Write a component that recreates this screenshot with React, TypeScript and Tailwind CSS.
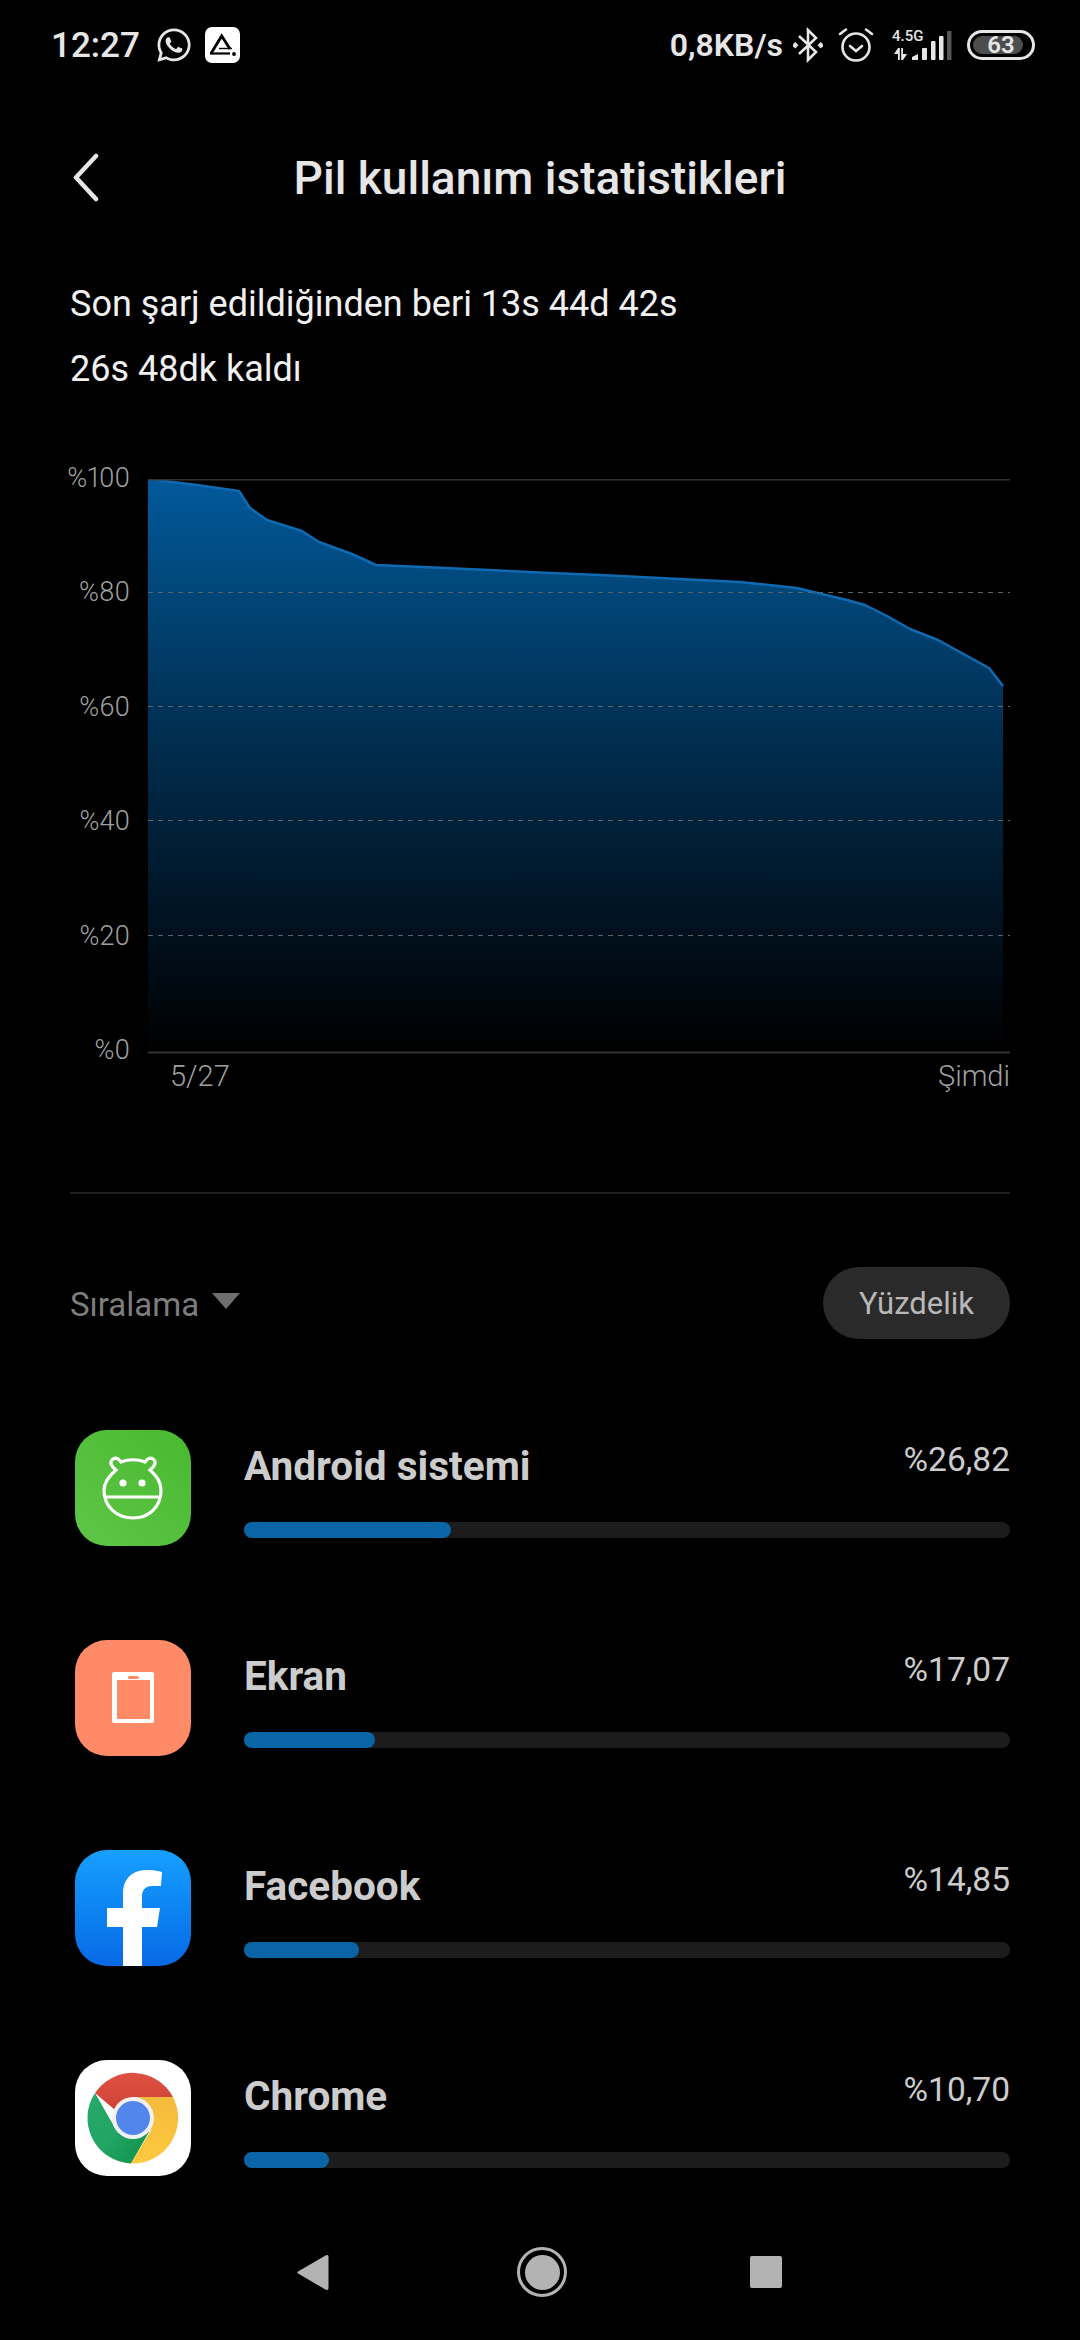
import { FaWhatsapp } from 'react-icons/fa';

// Battery usage stats screen (MIUI dark). Chart coordinates are in page pixels, shifted by the svg origin.

const CURVE: [number, number][] = [
  [148, 479], [197, 485], [239, 491], [250, 508], [267, 520], [302, 531], [319, 542], [352, 554],
  [376, 565], [423, 567], [550, 573], [600, 575], [740, 582], [797, 588], [847, 600], [865, 605],
  [887, 616], [910, 629], [938, 640], [960, 652], [989, 668], [1003, 686],
];

const points = CURVE.map(([x, y]) => `${x - 148},${y - 479}`).join(' ');

function BatteryChart() {
  return (
    <svg width={862} height={575} viewBox="0 0 862 575" className="block">
      <defs>
        <linearGradient id="chartFill" x1="0" y1="0" x2="0" y2="1">
          <stop offset="0" stopColor="#02599b" />
          <stop offset="0.2" stopColor="#014678" />
          <stop offset="0.45" stopColor="#012e50" />
          <stop offset="0.75" stopColor="#011424" />
          <stop offset="1" stopColor="#000000" />
        </linearGradient>
      </defs>
      <polygon points={`0,573 ${points} 855,573`} fill="url(#chartFill)" />
      <polyline points={points} fill="none" stroke="#0f6ab2" strokeWidth={2.5} strokeLinejoin="round" />
      <line x1={0} x2={862} y1={0.5} y2={0.5} stroke="#333333" strokeWidth={2} />
      {[113, 227, 341, 456].map((y) => (
        <line key={y} x1={0} x2={862} y1={y + 0.5} y2={y + 0.5} stroke="#5c6468" strokeWidth={1} strokeDasharray="5 5" />
      ))}
      <line x1={0} x2={862} y1={573.5} y2={573.5} stroke="#333333" strokeWidth={2} />
    </svg>
  );
}

function AppMark() {
  return (
    <div className="ml-[12px] h-[36px] w-[35px] rounded-[7px] bg-white">
      <svg width={35} height={36} viewBox="0 0 35 36" fill="none" stroke="#000">
        <path d="M6 26.5 L16.7 9 L25 22" strokeWidth={2.8} />
        <path d="M14 21.5 H27" strokeWidth={1.4} />
        <path d="M5 26.5 H25" strokeWidth={2.2} />
        <circle cx={29} cy={27} r={1.9} fill="#000" stroke="none" />
      </svg>
    </div>
  );
}

function StatusRight() {
  return (
    <div className="flex items-center">
      <span className="text-[32px] font-semibold leading-none text-[#e6e6e6]">0,8KB/s</span>
      <svg width={30} height={36} viewBox="0 0 30 36" fill="none" stroke="#e6e6e6" strokeWidth={2.6} className="ml-[10px]">
        <path d="M6 9 L23 25 L15 33 V3 L23 11 L6 27" />
        <rect x={0} y={16} width={4.5} height={4.5} fill="#e6e6e6" stroke="none" transform="rotate(45 2.25 18.25)" />
        <rect x={25.5} y={16} width={4.5} height={4.5} fill="#e6e6e6" stroke="none" transform="rotate(45 27.75 18.25)" />
      </svg>
      <svg width={36} height={36} viewBox="0 0 36 36" fill="none" stroke="#e6e6e6" strokeWidth={2.6} className="ml-[15px]" strokeLinecap="round">
        <circle cx={18} cy={20} r={13.5} />
        <path d="M12 19 L18 24 L24 19" />
        <path d="M2 7 L8 2.5" />
        <path d="M34 7 L28 2.5" />
      </svg>
      <div className="relative ml-[18px] h-[31px] w-[60px]">
        <svg width={60} height={31} viewBox="0 0 60 31" fill="#e6e6e6" className="block">
          <path d="M6 18 L2 24 H6 V30 H7.8 V18 Z" />
          <path d="M11 30 L15 24 H11 V18 H9.2 V30 Z" />
          <path d="M20 30 V27 L26 24 V30 Z" />
          <rect x={30} y={18} width={5} height={12} rx={1} />
          <rect x={39} y={11} width={4.5} height={19} rx={1} />
          <rect x={47} y={6} width={4.5} height={24} rx={1} />
          <rect x={55} y={1} width={4.5} height={29} fill="#555555" />
        </svg>
        <span className="absolute left-0 top-0 text-[15px] font-medium leading-[13px] text-[#e6e6e6]">4.5G</span>
      </div>
      <div className="ml-[15px] flex h-[30px] w-[68px] items-center rounded-full border-[3px] border-[#e6e6e6] p-[3px]">
        <div className="relative h-full w-[50px] rounded-full bg-[#4d4d4d]">
          <span className="absolute inset-0 flex items-center justify-center pl-[6px] text-[24px] font-semibold leading-none text-[#e6e6e6]">63</span>
        </div>
      </div>
    </div>
  );
}

function AndroidIcon() {
  return (
    <div className="h-[116px] w-[116px] rounded-[32px] bg-gradient-to-tr from-[#5fc647] to-[#48b92f]">
      <svg width={116} height={116} viewBox="0 0 116 116" fill="none" stroke="#fff" strokeWidth={3.2}>
        <path d="M41 40 C36 36 34 32 38 29 C41 27 44 29 46 32 C53 29 63 29 70 32 C72 29 75 27 78 29 C82 32 80 36 75 40 C82 46 86 53 86 60 C86 77 74 88 58 88 C42 88 29 77 29 60 C29 53 34 46 41 40 Z" />
        <path d="M30 67 H85" />
        <circle cx={48} cy={53} r={3.6} fill="#fff" stroke="none" />
        <circle cx={67} cy={53} r={3.6} fill="#fff" stroke="none" />
      </svg>
    </div>
  );
}

function ScreenIcon() {
  return (
    <div className="h-[116px] w-[116px] rounded-[32px] bg-[#ff8a68]">
      <svg width={116} height={116} viewBox="0 0 116 116">
        <rect x={37} y={32} width={42} height={51} rx={2} fill="#fff" />
        <rect x={42} y={40} width={33} height={39} fill="#ff8a68" />
        <rect x={53} y={36} width={11} height={3} rx={1.5} fill="#ff8a68" />
      </svg>
    </div>
  );
}

function FacebookIcon() {
  return (
    <div className="h-[116px] w-[116px] overflow-hidden rounded-[32px] bg-gradient-to-b from-[#189fff] to-[#0a69e6]">
      <svg width={116} height={116} viewBox="0 0 116 116">
        <path
          d="M48 116 V77 H32 V58 H48 V44 C48 28 58 20 72 20 C78 20 84 21 87 22 L86 36 H77 C70 36 67 40 67 47 V58 H85 L82 77 H67 V116 Z"
          fill="#fff"
        />
      </svg>
    </div>
  );
}

function ChromeIcon() {
  return (
    <div className="h-[116px] w-[116px] rounded-[32px] bg-white">
      <svg width={116} height={116} viewBox="0 0 116 116">
        <defs>
          <linearGradient id="chromeRed" x1="0" y1="0" x2="0" y2="1">
            <stop offset="0" stopColor="#dc5142" />
            <stop offset="1" stopColor="#cf4436" />
          </linearGradient>
          <linearGradient id="chromeGreen" x1="1" y1="1" x2="0" y2="0">
            <stop offset="0" stopColor="#0f8f47" />
            <stop offset="0.5" stopColor="#22a565" />
            <stop offset="1" stopColor="#25a868" />
          </linearGradient>
          <linearGradient id="chromeYellow" x1="0" y1="0" x2="0" y2="1">
            <stop offset="0" stopColor="#f5bb3d" />
            <stop offset="1" stopColor="#fdc93d" />
          </linearGradient>
        </defs>
        <path d="M20 33 A45.5 45.5 0 0 1 98 37 L58 37 L40 50 Z" fill="url(#chromeRed)" />
        <path d="M20 33 A45.5 45.5 0 0 0 56 103.5 L74 72 L40 68 Z" fill="url(#chromeGreen)" />
        <path d="M98 37 A45.5 45.5 0 0 1 56 103.5 L76 70 L62 37 Z" fill="url(#chromeYellow)" />
        <circle cx={58} cy={58} r={21} fill="#f1f1f4" />
        <circle cx={58} cy={58} r={17} fill="#5386ec" />
      </svg>
    </div>
  );
}

const USAGE = [
  { name: 'Android sistemi', percent: '%26,82', fill: 'w-[207px]', icon: <AndroidIcon /> },
  { name: 'Ekran', percent: '%17,07', fill: 'w-[131px]', icon: <ScreenIcon /> },
  { name: 'Facebook', percent: '%14,85', fill: 'w-[115px]', icon: <FacebookIcon /> },
  { name: 'Chrome', percent: '%10,70', fill: 'w-[85px]', icon: <ChromeIcon /> },
];

function UsageRow({ name, percent, fill, icon }: (typeof USAGE)[number]) {
  return (
    <div className="flex h-[116px] pl-[5px]">
      {icon}
      <div className="ml-[53px] flex flex-1 flex-col">
        <div className="flex h-[60px] items-start justify-between">
          <span className="mt-[11px] text-[40.5px] font-bold leading-[50px] text-[#cccccc]">{name}</span>
          <span className="mt-[9px] text-[33.5px] leading-[42px] text-[#cccccc]">{percent}</span>
        </div>
        <div className="mt-[32px] h-[16px] rounded-full bg-[#1c1c1c]">
          <div className={`h-full rounded-full bg-[#0a65a6] ${fill}`} />
        </div>
      </div>
    </div>
  );
}

export default function App() {
  return (
    <div className="flex h-[2340px] w-[1080px] flex-col overflow-hidden bg-black font-['Roboto',sans-serif]">
      {/* status bar */}
      <div className="flex h-[90px] items-center justify-between pl-[51px] pr-[45px]">
        <div className="flex items-center">
          <span className="text-[35px] font-medium leading-none text-[#e6e6e6]">12:27</span>
          <FaWhatsapp className="ml-[15px] text-[38px] text-[#e6e6e6]" />
          <AppMark />
        </div>
        <StatusRight />
      </div>

      {/* header */}
      <div className="relative flex h-[182px] items-center justify-center pb-[6px]">
        <svg width={30} height={50} viewBox="0 0 30 50" fill="none" stroke="#e6e6e6" strokeWidth={4.5} strokeLinecap="round" strokeLinejoin="round" className="absolute left-[72px] top-[63px]">
          <path d="M24 3 L4 24.5 L24 46" />
        </svg>
        <h1 className="text-[46px] font-medium leading-none text-[#e6e6e6]">Pil kullanım istatistikleri</h1>
      </div>

      <div className="flex flex-1 flex-col px-[70px]">
        <div className="text-[36px] leading-[65px] text-[#f0f0f0]">
          <div>Son şarj edildiğinden beri 13s 44d 42s</div>
          <div>26s 48dk kaldı</div>
        </div>

        {/* chart */}
        <div className="mt-[60px] flex">
          <div className="flex h-[604px] w-[60px] flex-col items-end justify-between text-[27px] font-light leading-[32px] text-[#a0a0a0] proportional-nums">
            {['%100', '%80', '%60', '%40', '%20', '%0'].map((label) => (
              <span key={label}>{label}</span>
            ))}
          </div>
          <div className="ml-[18px] mt-[17px] flex w-[862px] flex-col">
            <BatteryChart />
            <div className="flex h-[44px] items-center justify-between pl-[22px] text-[29px] font-light leading-none text-[#a0a0a0]">
              <span>5/27</span>
              <span>Şimdi</span>
            </div>
          </div>
        </div>

        <div className="mt-[94px] h-[2px] bg-[#1f1f1f]" />

        {/* sort row */}
        <div className="mt-[73px] flex h-[72px] items-center justify-between">
          <div className="flex items-center">
            <span className="mt-[2px] text-[33px] leading-none text-[#7d7d7d]">Sıralama</span>
            <svg width={28} height={16} viewBox="0 0 28 16" className="mb-[4px] ml-[13px]">
              <path d="M0 0 H28 L14 16 Z" fill="#6f6f6f" />
            </svg>
          </div>
          <div className="flex h-[72px] w-[187px] items-center justify-center rounded-full bg-[#2a2a2a] text-[31px] leading-none text-[#b8b8b8]">
            Yüzdelik
          </div>
        </div>

        {/* usage list */}
        <div className="mt-[91px] flex flex-col gap-[94px]">
          {USAGE.map((row) => (
            <UsageRow key={row.name} {...row} />
          ))}
        </div>
      </div>

      {/* navigation bar */}
      <div className="flex h-[126px] items-center pb-[10px] pl-[297px]">
        <svg width={32} height={37} viewBox="0 0 32 37">
          <path d="M30 1 C31 1 31.5 1.5 31.5 3 V34 C31.5 36 30 36.5 28.5 35.5 L1 19.5 C0 19 0 18 1 17.5 L28.5 1.5 Z" fill="#b3b3b3" />
        </svg>
        <div className="ml-[188px] flex h-[50px] w-[50px] items-center justify-center rounded-full border-[3px] border-[#b3b3b3]">
          <div className="h-[35px] w-[35px] rounded-full bg-[#b3b3b3]" />
        </div>
        <div className="ml-[183px] h-[32px] w-[32px] rounded-[2px] bg-[#b3b3b3]" />
      </div>
    </div>
  );
}
